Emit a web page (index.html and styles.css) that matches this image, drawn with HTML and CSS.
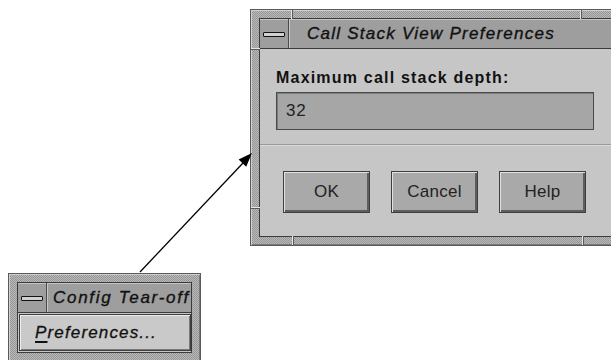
FILE: index.html
```html
<!DOCTYPE html>
<html>
<head>
<meta charset="utf-8">
<link rel="stylesheet" href="styles.css">
</head>
<body>
<div class="win dialog">
  <span class="tick tv" style="left:40px;top:0"></span>
  <span class="tick tv" style="left:329px;top:0"></span>
  <span class="tick tv" style="left:41px;bottom:0"></span>
  <span class="tick tv" style="left:331px;bottom:0"></span>
  <span class="tick th" style="left:0;top:38px"></span>
  <span class="tick th" style="left:0;top:197px"></span>
  <div class="inner">
    <div class="titlebar">
      <div class="menubtn"><span class="dash"></span></div>
      <div class="title">Call Stack View Preferences</div>
    </div>
    <div class="body">
      <div class="form">
        <div class="label">Maximum call stack depth:</div>
        <div class="field">32</div>
      </div>
      <div class="sep"></div>
      <div class="buttons">
        <div class="btn">OK</div>
        <div class="btn">Cancel</div>
        <div class="btn">Help</div>
      </div>
    </div>
  </div>
</div>

<div class="win tearoff">
  <div class="inner">
    <div class="titlebar small">
      <div class="menubtn"><span class="dash"></span></div>
      <div class="title t2">Config Tear-off</div>
    </div>
    <div class="menu">
      <div class="item"><span class="mn">P</span>references...</div>
    </div>
  </div>
</div>

<svg class="arrow" width="611" height="360" viewBox="0 0 611 360">
  <line x1="140" y1="272" x2="243" y2="163" stroke="#000" stroke-width="1.3"/>
  <polygon points="252,153 246.2,166.8 238.6,159.6" fill="#000"/>
</svg>
</body>
</html>
```
FILE: styles.css
```css
html, body {
  margin: 0;
  padding: 0;
}
body {
  position: relative;
  width: 611px;
  height: 360px;
  overflow: hidden;
  background: #ffffff;
  font-family: "Liberation Sans", Arial, sans-serif;
  color: #111;
}

.win {
  position: absolute;
  border: 1px solid #5a5a5a;
  padding: 8px;
  background: repeating-conic-gradient(#969696 0 25%, #b9b9b9 0 50%) 0 0 / 2px 2px;
  box-shadow: inset 1px 1px 0 #cfcfcf, inset -1px -1px 0 #7a7a7a;
}
.dialog {
  left: 250px;
  top: 9px;
  width: 372px;
}
.tearoff {
  left: 8px;
  top: 273px;
  width: 175px;
}

.tick {
  position: absolute;
  display: block;
}
.tick.tv {
  width: 1px;
  height: 9px;
  background: #e6e6e6;
  border-right: 1px solid #5a5a5a;
}
.tick.th {
  height: 1px;
  width: 9px;
  background: #e6e6e6;
  border-bottom: 1px solid #5a5a5a;
}

.inner {
  border: 1px solid #3a3a3a;
  background: #c6c6c6;
}

.titlebar {
  display: flex;
  height: 29px;
  background: #9e9e9e;
  border-bottom: 1px solid #3a3a3a;
  box-shadow: inset 0 1px 0 #c4c4c4;
}
.menubtn {
  width: 28px;
  flex: none;
  display: flex;
  align-items: center;
  justify-content: center;
  border-right: 1px solid #4a4a4a;
  box-shadow: 1px 0 0 #c8c8c8;
}
.dash {
  display: block;
  width: 20px;
  height: 3px;
  border: 1px solid #111;
  border-radius: 1px;
  background: #d0d0d0;
  margin-top: 2px;
}
.title {
  padding-left: 18px;
  font-style: italic;
  font-size: 17px;
  letter-spacing: 1.25px;
  line-height: 29px;
  white-space: nowrap;
  color: #111;
  -webkit-text-stroke: 0.35px #111;
}
.title.t2 {
  padding-left: 6px;
  letter-spacing: 1.7px;
}

.form {
  padding: 20px 0 0 16px;
}
.label {
  font-weight: bold;
  font-size: 16px;
  letter-spacing: 1.2px;
  line-height: 18px;
  color: #111;
}
.field {
  margin-top: 5px;
  height: 36px;
  border: 1px solid #4a4a4a;
  background: #a6a6a6;
  box-shadow: inset 1px 1px 0 #7c7c7c;
  font-size: 17px;
  letter-spacing: 0.9px;
  line-height: 36px;
  padding-left: 9px;
  width: 307px;
  color: #222;
}
.sep {
  margin-top: 14px;
  height: 1px;
  background: #9a9a9a;
  border-bottom: 1px solid #dadada;
}
.buttons {
  display: flex;
  padding: 25px 0 23px 23px;
}
.btn {
  width: 85px;
  height: 40px;
  margin-right: 21px;
  border: 1px solid #3e3e3e;
  background: #a9a9a9;
  box-shadow: inset 1px 1px 0 #e2e2e2, inset -2px -2px 0 #5e5e5e;
  display: flex;
  align-items: center;
  justify-content: center;
  font-size: 17px;
  letter-spacing: 0.3px;
  color: #222;
}

.menu {
  padding: 1px 0 1px 1px;
}
.item {
  height: 35px;
  border: 1px solid #3e3e3e;
  background: #c9c9c9;
  box-shadow: inset 1px 1px 0 #ececec, inset -1px -1px 0 #7a7a7a;
  font-style: italic;
  font-size: 17px;
  letter-spacing: 1.15px;
  line-height: 35px;
  padding-left: 15px;
  color: #111;
  -webkit-text-stroke: 0.3px #111;
}
.mn {
  text-decoration: underline;
  text-decoration-thickness: 2px;
  text-underline-offset: 3px;
}

.arrow {
  position: absolute;
  left: 0;
  top: 0;
  pointer-events: none;
}
```
